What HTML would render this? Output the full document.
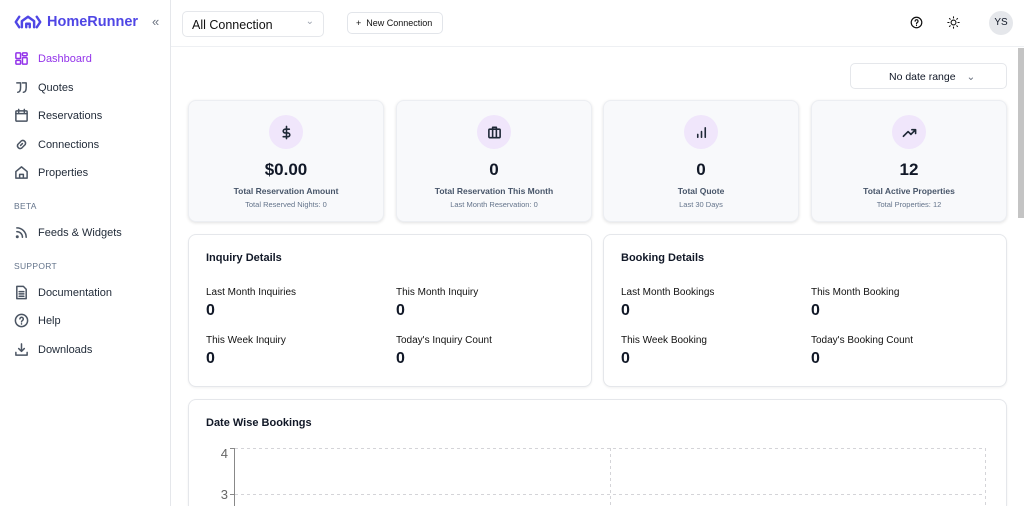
<!DOCTYPE html>
<html style="height:506px;overflow:hidden"><head><meta charset="utf-8"><style>
*{box-sizing:border-box;margin:0;padding:0}
body{width:1024px;height:506px;overflow:hidden;font-family:"Liberation Sans",sans-serif;background:#fff;color:#111827;position:relative}
.sb{position:absolute;left:0;top:0;width:171px;height:506px;border-right:1px solid #e5e7eb;background:#fff}
.logo{position:absolute;left:14px;top:14px;display:flex;align-items:center;gap:5px;color:#4f46e5;font-weight:bold;font-size:14.5px}
.coll{position:absolute;left:152px;top:14px;color:#6b7280;font-size:13px}
.nav{position:absolute;left:14px;display:flex;align-items:center;gap:9px;font-size:11px;color:#1f2937}
.nav svg{width:15px;height:15px;fill:none;stroke:#4b5563;stroke-width:1.6;stroke-linecap:round;stroke-linejoin:round}
.sec{position:absolute;left:14px;font-size:8.5px;color:#64748b;letter-spacing:.3px}
.hdr{position:absolute;left:171px;top:0;right:0;height:47px;border-bottom:1px solid #eef0f3}
.sel{position:absolute;left:182px;top:11px;width:142px;height:26px;border:1px solid #e5e7eb;border-radius:5px;font-size:12.5px;padding:6px 9px;color:#111}
.btn{position:absolute;left:347px;top:12px;width:96px;height:22px;border:1px solid #e2e5ea;border-radius:5px;font-size:9px;padding:5px 8px;color:#111}
.card{position:absolute;background:#f8f9fb;border:1px solid #eceef2;border-radius:8px;box-shadow:0 1px 3px rgba(0,0,0,.12);text-align:center}
.ic{width:34px;height:34px;border-radius:50%;background:#f0e6fb;margin:14px auto 0;display:flex;align-items:center;justify-content:center}
.ic svg{width:15px;height:15px;fill:none;stroke:#1f2937;stroke-width:1.7;stroke-linecap:round;stroke-linejoin:round}
.val{font-size:17px;font-weight:bold;margin-top:11px}
.lb{font-size:8.5px;color:#475569;margin-top:6px;font-weight:bold}
.sl{font-size:7.5px;color:#64748b;margin-top:4px}
.box{position:absolute;background:#fff;border:1px solid #e5e7eb;border-radius:8px;box-shadow:0 1px 2px rgba(0,0,0,.06)}
.bt{position:absolute;left:17px;top:17px;font-size:11px;font-weight:bold}
.dl{position:absolute;font-size:10px;color:#111}
.dv{position:absolute;font-size:16px;font-weight:bold}
</style></head><body>
<div class="sb">
 <div class="logo"><svg width="28" height="16" viewBox="0 0 32 18" fill="none" stroke="#4f46e5" stroke-width="2.8" stroke-linecap="round" stroke-linejoin="round"><path d="M6 3L2 9l4 6"/><path d="M26 3l4 6-4 6"/><path d="M9 15V8l7-5 7 5v7"/><path d="M14 15v-4h4v4"/></svg>HomeRunner</div>
 <div class="coll">«</div>
 <div class="nav" style="top:51px;color:#9333ea"><svg viewBox="0 0 16 16" style="stroke:#9333ea"><rect x="2" y="2" width="5" height="6" rx="1"/><rect x="9" y="2" width="5" height="3" rx="1"/><rect x="9" y="7" width="5" height="7" rx="1"/><rect x="2" y="10" width="5" height="4" rx="1"/></svg>Dashboard</div>
 <div class="nav" style="top:80px"><svg viewBox="0 0 16 16"><path d="M3 3h4v5c0 3-1 5-3 5M9 3h4v5c0 3-1 5-3 5"/></svg>Quotes</div>
 <div class="nav" style="top:108px"><svg viewBox="0 0 16 16"><rect x="2" y="3" width="12" height="11" rx="1"/><path d="M2 6h12M5 1.5v3M11 1.5v3"/></svg>Reservations</div>
 <div class="nav" style="top:137px"><svg viewBox="0 0 16 16"><path d="M7 9l2-2M6 6l2-2a3 3 0 014 4l-2 2M10 10l-2 2a3 3 0 01-4-4l2-2"/></svg>Connections</div>
 <div class="nav" style="top:165px"><svg viewBox="0 0 16 16"><path d="M2 14V7l6-5 6 5v7zM6 14V10h4v4"/></svg>Properties</div>
 <div class="sec" style="top:201px">BETA</div>
 <div class="nav" style="top:225px"><svg viewBox="0 0 16 16"><path d="M3 3a10 10 0 0110 10M3 7a6 6 0 016 6"/><circle cx="3.5" cy="12.5" r=".8"/></svg>Feeds &amp; Widgets</div>
 <div class="sec" style="top:261px">SUPPORT</div>
 <div class="nav" style="top:285px"><svg viewBox="0 0 16 16"><path d="M3 1.5h7l3 3v10H3zM5.5 7h5M5.5 9.5h5M5.5 12h5"/></svg>Documentation</div>
 <div class="nav" style="top:313px"><svg viewBox="0 0 16 16"><circle cx="8" cy="8" r="6.5"/><path d="M6.3 6.3a1.8 1.8 0 113 1.4c-.8.5-1.3.9-1.3 1.8M8 11.5v.2"/></svg>Help</div>
 <div class="nav" style="top:342px"><svg viewBox="0 0 16 16"><path d="M8 2v8M5 7l3 3 3-3M2 11v3h12v-3"/></svg>Downloads</div>
</div>
<div class="hdr"></div>
<div class="sel">All Connection<span style="position:absolute;right:9px;top:4px;color:#9ca3af;font-size:10px">&#8964;</span></div>
<div class="btn">+&nbsp; New Connection</div>
<svg style="position:absolute;left:910px;top:16px" width="13" height="13" viewBox="0 0 16 16" fill="none" stroke="#111" stroke-width="1.5" stroke-linecap="round"><circle cx="8" cy="8" r="6.5"/><path d="M6.3 6.3a1.8 1.8 0 113 1.4c-.8.5-1.3.9-1.3 1.8M8 11.5v.2"/></svg>
<svg style="position:absolute;left:947px;top:16px" width="13" height="13" viewBox="0 0 16 16" fill="none" stroke="#111" stroke-width="1.3" stroke-linecap="round"><circle cx="8" cy="8" r="3"/><path d="M8 1v1.5M8 13.5V15M1 8h1.5M13.5 8H15M3 3l1 1M12 12l1 1M3 13l1-1M12 4l1-1"/></svg>
<div style="position:absolute;left:989px;top:11px;width:24px;height:24px;border-radius:50%;background:#e5e7eb;font-size:10px;text-align:center;line-height:24px">YS</div>
<div style="position:absolute;left:1018px;top:48px;width:6px;height:170px;background:#c4c4c4"></div>
<div style="position:absolute;left:850px;top:63px;width:157px;height:26px;border:1px solid #e5e7eb;border-radius:5px;font-size:10.5px;padding:7px 0 0 38px">No date range <span style="color:#6b7280;margin-left:8px">&#8964;</span></div>

<div class="card" style="left:188px;top:100px;width:196px;height:122px"><div class="ic"><svg viewBox="0 0 16 16"><path d="M8 1.5v13M11 4.5H6.5a2 2 0 000 4h3a2 2 0 010 4H4.5"/></svg></div><div class="val">$0.00</div><div class="lb">Total Reservation Amount</div><div class="sl">Total Reserved Nights: 0</div></div>
<div class="card" style="left:396px;top:100px;width:196px;height:122px"><div class="ic"><svg viewBox="0 0 16 16"><rect x="2" y="4.5" width="12" height="9" rx="1"/><path d="M6 4.5V2.5h4v2M6 4.5v9M10 4.5v9"/></svg></div><div class="val">0</div><div class="lb">Total Reservation This Month</div><div class="sl">Last Month Reservation: 0</div></div>
<div class="card" style="left:603px;top:100px;width:196px;height:122px"><div class="ic"><svg viewBox="0 0 16 16"><path d="M4 13v-3M8 13V7M12 13V3"/></svg></div><div class="val">0</div><div class="lb">Total Quote</div><div class="sl">Last 30 Days</div></div>
<div class="card" style="left:811px;top:100px;width:196px;height:122px"><div class="ic"><svg viewBox="0 0 16 16"><path d="M1.5 12l5-5 3 3 5-5M10.5 5h4v4"/></svg></div><div class="val">12</div><div class="lb">Total Active Properties</div><div class="sl">Total Properties: 12</div></div>

<div class="box" style="left:188px;top:234px;width:404px;height:153px"><div class="bt">Inquiry Details</div>
<div class="dl" style="left:17px;top:52px">Last Month Inquiries</div><div class="dv" style="left:17px;top:67px">0</div>
<div class="dl" style="left:207px;top:52px">This Month Inquiry</div><div class="dv" style="left:207px;top:67px">0</div>
<div class="dl" style="left:17px;top:100px">This Week Inquiry</div><div class="dv" style="left:17px;top:115px">0</div>
<div class="dl" style="left:207px;top:100px">Today's Inquiry Count</div><div class="dv" style="left:207px;top:115px">0</div></div>
<div class="box" style="left:603px;top:234px;width:404px;height:153px"><div class="bt">Booking Details</div>
<div class="dl" style="left:17px;top:52px">Last Month Bookings</div><div class="dv" style="left:17px;top:67px">0</div>
<div class="dl" style="left:207px;top:52px">This Month Booking</div><div class="dv" style="left:207px;top:67px">0</div>
<div class="dl" style="left:17px;top:100px">This Week Booking</div><div class="dv" style="left:17px;top:115px">0</div>
<div class="dl" style="left:207px;top:100px">Today's Booking Count</div><div class="dv" style="left:207px;top:115px">0</div></div>

<div class="box" style="left:188px;top:399px;width:819px;height:107px;border-bottom:none;border-radius:8px 8px 0 0"><div class="bt">Date Wise Bookings</div></div>
<svg style="position:absolute;left:200px;top:440px" width="800" height="66">
<g stroke="#d4d4d8" stroke-dasharray="3 3" fill="none"><path d="M35 8.5H785M35 54.5H785M410.5 8V66M785.5 8V66"/></g>
<path d="M34.5 8V66M30 8.5h5M30 54.5h5" stroke="#888" fill="none"/>
<text x="28" y="18" font-size="13" fill="#666" text-anchor="end" font-family="Liberation Sans">4</text>
<text x="28" y="59" font-size="13" fill="#666" text-anchor="end" font-family="Liberation Sans">3</text>
</svg>
</body></html>
